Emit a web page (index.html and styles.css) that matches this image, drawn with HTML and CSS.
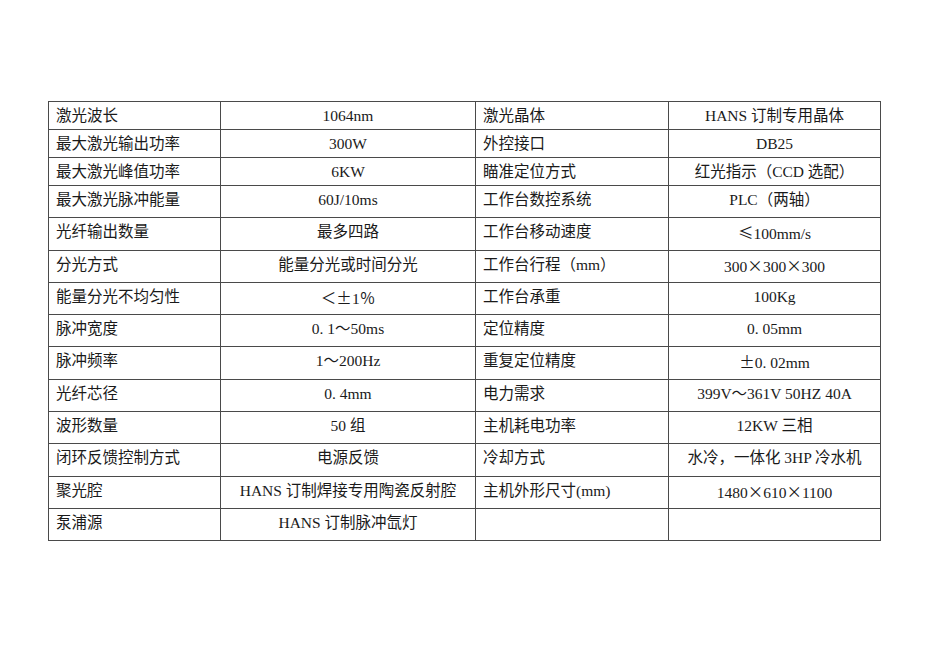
FILE: index.html
```html
<!DOCTYPE html>
<html lang="zh-CN">
<head>
<meta charset="utf-8">
<title>参数表</title>
<link rel="stylesheet" href="styles.css">
</head>
<body>
<div class="page">
<table class="spec">
<colgroup><col class="c1"><col class="c2"><col class="c3"><col class="c4"></colgroup>
<tr class="short"><td class="k">激光波长</td><td class="v">1064nm</td><td class="k">激光晶体</td><td class="v">HANS 订制专用晶体</td></tr>
<tr class="short"><td class="k">最大激光输出功率</td><td class="v">300W</td><td class="k">外控接口</td><td class="v">DB25</td></tr>
<tr class="short"><td class="k">最大激光峰值功率</td><td class="v">6KW</td><td class="k">瞄准定位方式</td><td class="v">红光指示（CCD 选配）</td></tr>
<tr><td class="k">最大激光脉冲能量</td><td class="v">60J/10ms</td><td class="k">工作台数控系统</td><td class="v">PLC（两轴）</td></tr>
<tr><td class="k">光纤输出数量</td><td class="v">最多四路</td><td class="k">工作台移动速度</td><td class="v"><span class="fw">≤</span>100mm/s</td></tr>
<tr><td class="k">分光方式</td><td class="v">能量分光或时间分光</td><td class="k">工作台行程（mm）</td><td class="v">300<span class="fw">×</span>300<span class="fw">×</span>300</td></tr>
<tr><td class="k">能量分光不均匀性</td><td class="v">＜<span class="fw">±</span>1％</td><td class="k">工作台承重</td><td class="v">100Kg</td></tr>
<tr><td class="k">脉冲宽度</td><td class="v">0.&nbsp;1～50ms</td><td class="k">定位精度</td><td class="v">0.&nbsp;05mm</td></tr>
<tr><td class="k">脉冲频率</td><td class="v">1～200Hz</td><td class="k">重复定位精度</td><td class="v"><span class="fw">±</span>0.&nbsp;02mm</td></tr>
<tr><td class="k">光纤芯径</td><td class="v">0.&nbsp;4mm</td><td class="k">电力需求</td><td class="v">399V～361V 50HZ 40A</td></tr>
<tr><td class="k">波形数量</td><td class="v">50 组</td><td class="k">主机耗电功率</td><td class="v">12KW 三相</td></tr>
<tr><td class="k">闭环反馈控制方式</td><td class="v">电源反馈</td><td class="k">冷却方式</td><td class="v">水冷，一体化 3HP 冷水机</td></tr>
<tr><td class="k">聚光腔</td><td class="v">HANS 订制焊接专用陶瓷反射腔</td><td class="k">主机外形尺寸(mm)</td><td class="v">1480<span class="fw">×</span>610<span class="fw">×</span>1100</td></tr>
<tr><td class="k">泵浦源</td><td class="v">HANS 订制脉冲氙灯</td><td class="k"></td><td class="v"></td></tr>
</table>
</div>
</body>
</html>
```

FILE: styles.css
```css
html, body {
  margin: 0;
  padding: 0;
  background: #ffffff;
}
.page {
  padding: 101px 0 0 48px;
}
.spec {
  border-collapse: collapse;
  table-layout: fixed;
  width: 832px;
  font-family: "Liberation Serif", "Noto Sans CJK SC", serif;
  font-size: 15.5px;
  color: #1a1a1a;
}
.c1 { width: 172px; }
.c2 { width: 255px; }
.c3 { width: 193px; }
.c4 { width: 212px; }
.spec td {
  border: 1px solid #4a4a4a;
  height: 32.3px;
  padding: 4px 6px 0 7px;
  line-height: 20px;
  vertical-align: top;
  box-sizing: border-box;
  white-space: nowrap;
  overflow: hidden;
}
.spec tr.short td {
  height: 28px;
}
.spec td.v {
  text-align: center;
  padding-left: 2px;
  padding-right: 2px;
}
.fw {
  font-family: "Noto Sans CJK SC", sans-serif;
}
```
